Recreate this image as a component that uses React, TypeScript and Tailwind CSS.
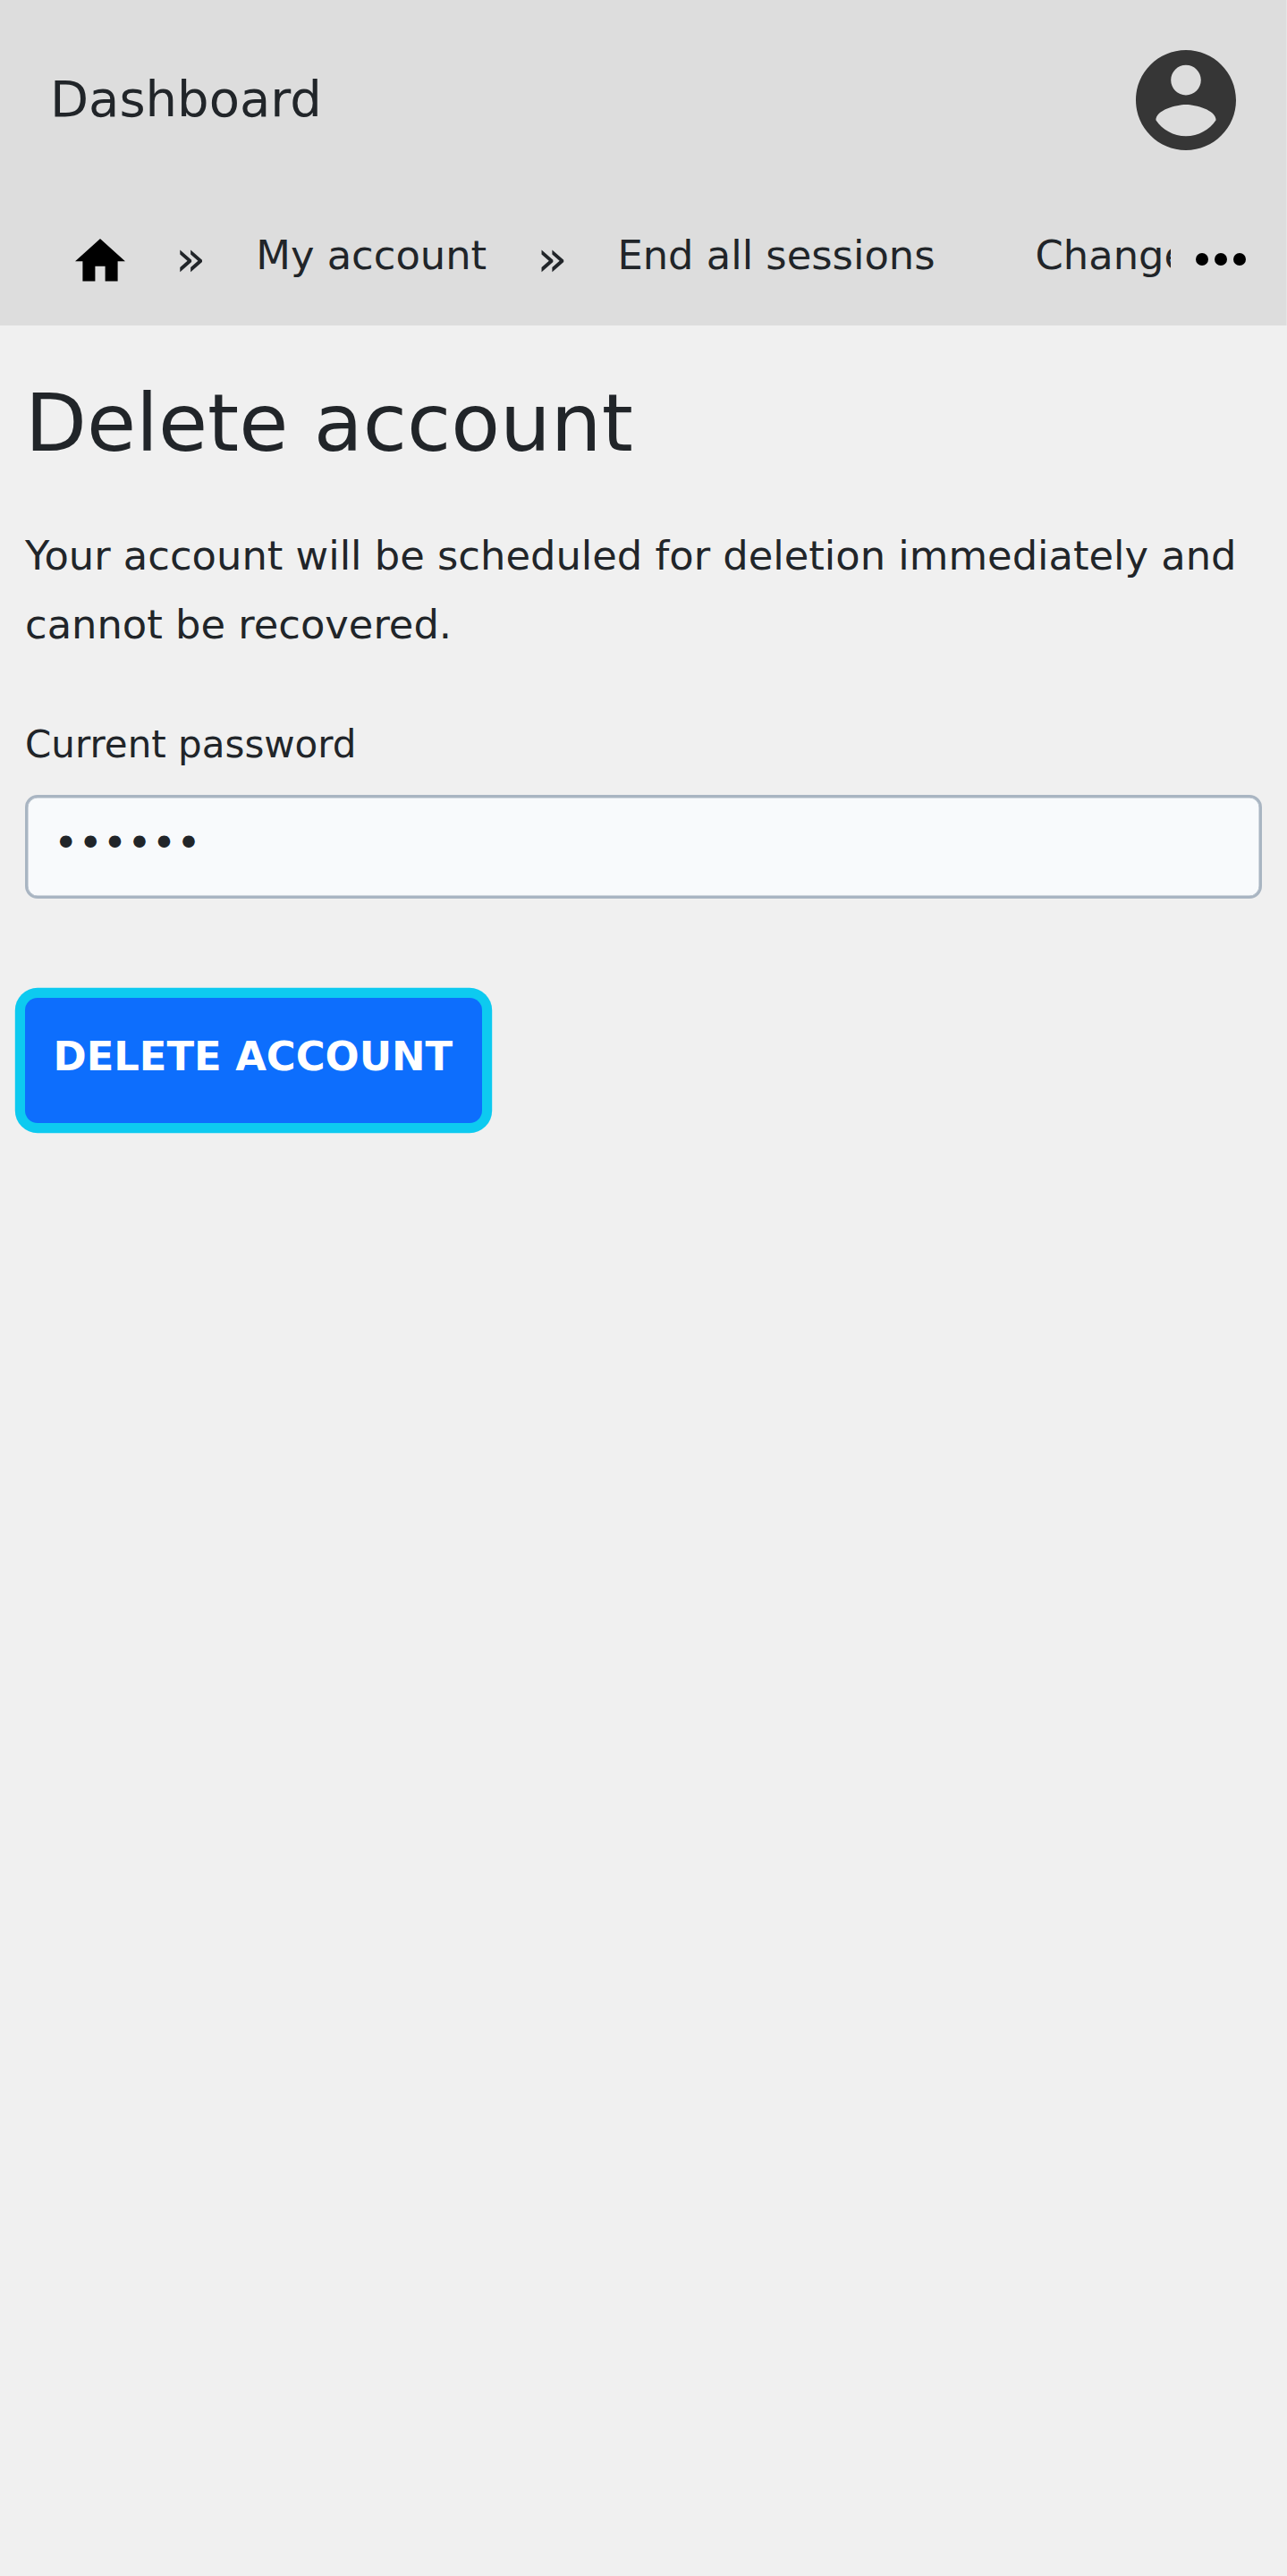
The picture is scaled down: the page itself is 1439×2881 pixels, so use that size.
function HomeIcon() {
  return (
    <svg viewBox="2 3 20 17" className="mt-[43px] h-[47.6px] w-14 shrink-0" fill="#000">
      <path d="M10 20v-6h4v6h5v-8h3L12 3 2 12h3v8z" />
    </svg>
  );
}

function AccountIcon() {
  return (
    <svg viewBox="2 2 20 20" className="size-28 shrink-0" fill="#363636">
      <path d="M12 2C6.48 2 2 6.48 2 12s4.48 10 10 10 10-4.48 10-10S17.52 2 12 2zm0 3c1.66 0 3 1.34 3 3s-1.34 3-3 3-3-1.34-3-3 1.34-3 3-3zm0 14.2c-2.5 0-4.71-1.28-6-3.22.03-1.99 4-3.08 6-3.08 1.99 0 5.97 1.09 6 3.08-1.29 1.94-3.5 3.22-6 3.22z" />
    </svg>
  );
}

function MoreIcon() {
  return (
    <svg viewBox="0 0 16 4" className="mt-[59.3px] ml-7 h-3.5 w-14 shrink-0" fill="#000">
      <circle cx="2" cy="2" r="2" />
      <circle cx="8" cy="2" r="2" />
      <circle cx="14" cy="2" r="2" />
    </svg>
  );
}

function Separator() {
  return <span className="mx-14 mt-[33px] text-[56px] leading-[64px]">»</span>;
}

export default function App() {
  return (
    <div className="min-h-[2881px] w-full bg-[#f0f0f0] font-['DejaVu_Sans',sans-serif] text-[44.8px] text-[#212529]">
      <header className="h-[364px] border-r border-[#e6e6e6] bg-[#dddddd]">
        <div className="flex h-56 items-center justify-between px-14">
          <a className="pb-[2px] text-[56px] leading-[66px]">Dashboard</a>
          <AccountIcon />
        </div>
        <nav className="flex h-[140px] items-start">
          <div className="flex h-full w-[1309px] items-start overflow-hidden pl-[84px] whitespace-nowrap">
            <HomeIcon />
            <Separator />
            <a className="mt-[35px] leading-[54px]">My account</a>
            <Separator />
            <a className="mt-[35px] leading-[54px]">End all sessions</a>
            <a className="mt-[35px] ml-28 leading-[54px]">Change password</a>
          </div>
          <MoreIcon />
        </nav>
      </header>
      <main className="px-7">
        <h1 className="pt-[55px] text-[89.6px] leading-[108px]">Delete account</h1>
        <p className="mt-[57px] leading-[76.6px]">
          Your account will be scheduled for deletion immediately and cannot be recovered.
        </p>
        <label className="mt-[57.8px] block text-[42px] leading-[76px]">Current password</label>
        <div className="mt-[18px] flex h-[116px] items-start rounded-[14px] border-[3px] border-[#a9b5c2] bg-[#f8fafc] pt-[23px] pl-[29px] text-[46.5px] leading-[56px] shadow-[inset_0_0_0_0.5px_#a9b5c2]">
          ••••••
        </div>
        <button className="mt-[111.3px] block h-[140px] w-[511px] rounded-[14px] bg-[#0d6efd] pb-[9px] pl-[31.5px] text-left font-bold whitespace-nowrap text-white shadow-[0_0_0_11.2px_#0dcaf0]">
          DELETE ACCOUNT
        </button>
      </main>
    </div>
  );
}
